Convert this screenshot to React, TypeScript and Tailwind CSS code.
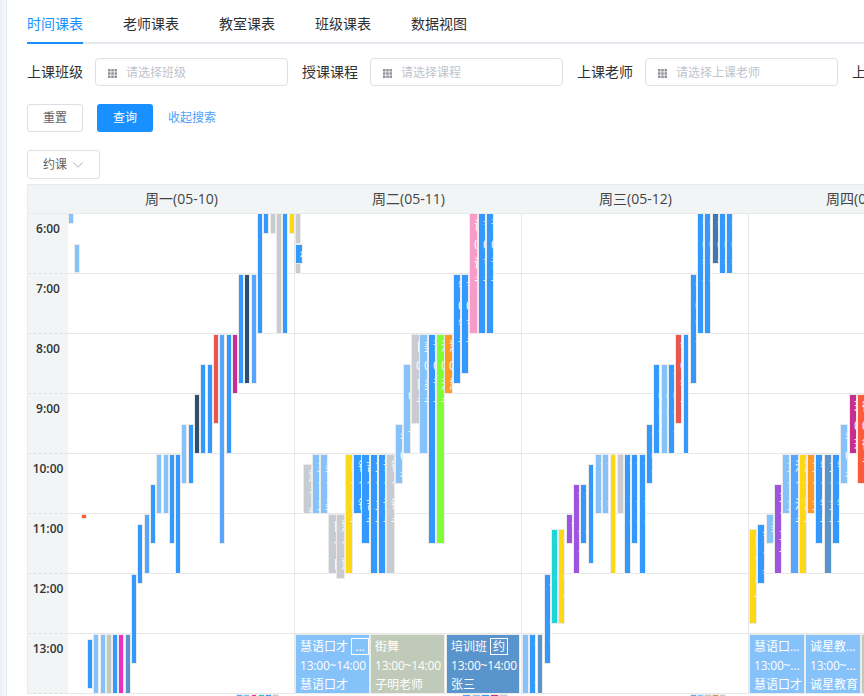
import { ChevronDown } from "lucide-react";

const blue = "#3399ff";
const sky = "#55a6ff";
const light = "#85c2fa";
const gray = "#c8ccd0";
const yellow = "#ffd814";
const navy = "#2f4f6f";
const steel = "#5a94cc";
const sage = "#bfcab8";
const red = "#e85650";
const berry = "#c82e8e";
const orange = "#ff9922";
const purple = "#9c55dc";

// x1, x2, y1, y2 in page pixels, colour, course
type Bar = [number, number, number, number, string, string?];

const bars: Bar[] = [
  [69, 73, 214, 223, light],
  [75, 79, 245, 272, light],
  [82, 86, 515, 518, "#ff5a2a"],
  [88, 92, 640, 688, blue],
  [94, 98, 635, 693, light],
  [101, 105, 635, 693, light],
  [107, 111, 635, 693, sage],
  [113, 117, 635, 693, blue],
  [119, 123, 635, 693, "#f02bc8"],
  [126, 130, 635, 693, steel],
  [132, 136, 575, 663, blue],
  [138, 142, 525, 583, blue],
  [145, 149, 515, 573, sky],
  [151, 155, 485, 543, blue],
  [157, 161, 455, 513, light],
  [164, 168, 455, 513, light],
  [170, 174, 455, 543, blue],
  [176, 180, 455, 573, blue],
  [182, 186, 425, 483, light],
  [189, 193, 425, 483, blue],
  [195, 199, 395, 453, navy],
  [201, 205, 365, 453, blue],
  [208, 212, 365, 453, blue],
  [214, 218, 335, 423, red],
  [220, 224, 335, 543, sky],
  [227, 231, 335, 453, blue],
  [233, 237, 335, 393, berry],
  [239, 243, 275, 383, blue],
  [245, 249, 275, 383, navy],
  [252, 256, 275, 383, sky],
  [258, 262, 214, 333, blue],
  [264, 268, 214, 233, blue],
  [271, 275, 214, 233, gray],
  [277, 281, 214, 333, gray],
  [283, 287, 214, 333, blue],
  [290, 294, 214, 233, yellow],
  [237, 242, 695, 720, sky],
  [244, 249, 695, 720, light],
  [252, 256, 695, 720, "#f02b98"],
  [259, 264, 695, 720, "#1ec8c8"],
  [266, 271, 695, 720, blue],
  [273, 278, 695, 720, gray],

  [296, 300, 214, 243, gray],
  [296, 302, 245, 263, blue, "街舞"],
  [296, 300, 264, 273, gray],
  [304, 311, 465, 513, gray, "慧语口才"],
  [313, 319, 455, 513, light, "主持"],
  [321, 327, 455, 513, light, "美术"],
  [329, 336, 515, 573, gray, "日语"],
  [337, 344, 515, 578, gray, "慧语口才"],
  [346, 352, 455, 573, yellow, "日语"],
  [354, 361, 455, 513, blue, "钢琴"],
  [362, 369, 455, 543, blue, "吉他"],
  [371, 377, 455, 573, blue, "主持"],
  [379, 385, 455, 573, blue, "诚星教育"],
  [387, 394, 455, 573, gray, "钢琴"],
  [396, 402, 425, 483, light, "老师"],
  [404, 410, 365, 453, light, "日语"],
  [412, 419, 335, 423, gray, "日语"],
  [420, 427, 335, 453, light, "美术"],
  [429, 435, 335, 543, blue, "诚星教育"],
  [437, 444, 335, 543, "#80ff33", "添加"],
  [445, 452, 335, 393, orange, "慧语口才"],
  [454, 460, 275, 383, blue, "钢琴"],
  [462, 468, 275, 373, blue, "吉他"],
  [470, 477, 214, 333, "#f59cc9", "诚星教育"],
  [479, 485, 214, 333, blue, "吉他"],
  [487, 493, 214, 333, blue, "诚星教育"],
  [463, 470, 695, 720, sky],
  [473, 480, 695, 720, light],
  [482, 489, 695, 720, blue],
  [491, 498, 695, 720, berry],
  [500, 507, 695, 720, gray],

  [523, 528, 635, 693, light, "慧语口才"],
  [530, 535, 635, 693, blue, "诚星教育"],
  [538, 542, 635, 693, steel],
  [545, 550, 575, 663, blue, "诚星教育"],
  [552, 557, 530, 623, "#1ed6d6", "钢琴"],
  [559, 564, 530, 623, yellow, "钢琴"],
  [567, 572, 515, 543, purple, "钢琴"],
  [574, 579, 485, 573, purple, "钢琴"],
  [581, 586, 485, 543, blue, "钢琴"],
  [589, 593, 465, 563, blue],
  [596, 601, 455, 513, light, "钢琴"],
  [603, 608, 455, 513, light, "钢琴"],
  [611, 615, 455, 573, yellow],
  [618, 623, 455, 513, gray, "钢琴"],
  [625, 630, 455, 573, blue, "钢琴"],
  [632, 637, 455, 543, blue, "钢琴"],
  [640, 645, 455, 573, blue, "钢琴"],
  [647, 652, 425, 483, blue, "钢琴"],
  [654, 659, 365, 453, blue, "钢琴"],
  [662, 667, 365, 453, light, "钢琴"],
  [669, 674, 365, 453, blue, "钢琴"],
  [676, 681, 335, 423, red, "钢琴"],
  [684, 688, 335, 453, blue],
  [691, 696, 275, 383, blue, "钢琴"],
  [698, 703, 214, 333, blue, "钢琴"],
  [705, 710, 214, 333, blue, "钢琴"],
  [713, 718, 214, 263, "#4178b0", "钢琴"],
  [720, 725, 214, 273, blue, "钢琴"],
  [727, 732, 214, 273, blue, "钢琴"],
  [691, 696, 695, 720, sky],
  [698, 703, 695, 720, light],
  [705, 711, 695, 720, sage],
  [713, 718, 695, 720, "#e88a2a"],
  [720, 725, 695, 720, gray],

  [750, 756, 530, 623, yellow, "日语"],
  [758, 764, 525, 583, blue, "吉他"],
  [767, 773, 515, 543, light, "美术"],
  [775, 781, 485, 573, purple, "主持"],
  [783, 789, 455, 513, light, "主持"],
  [791, 798, 455, 573, sky, "添加"],
  [800, 806, 455, 573, yellow, "慧语口才"],
  [808, 814, 455, 513, orange, "主持"],
  [816, 822, 455, 543, blue, "钢琴"],
  [825, 831, 455, 573, steel, "主持"],
  [833, 839, 455, 543, blue, "钢琴"],
  [841, 847, 425, 483, light, "老师"],
  [850, 856, 395, 453, berry, "珠心算"],
  [858, 864, 395, 483, "#ff5a3a", "街舞"],
];

const hours = ["6:00", "7:00", "8:00", "9:00", "10:00", "11:00", "12:00", "13:00"];
const days = ["周一(05-10)", "周二(05-11)", "周三(05-12)", "周四(05-13)"];
const tabs = ["时间课表", "老师课表", "教室课表", "班级课表", "数据视图"];
const filters = [
  ["上课班级", "请选择班级"],
  ["授课课程", "请选择课程"],
  ["上课老师", "请选择上课老师"],
  ["上课时间", "请选择上课时间"],
];

const grid_top = 214;

function GridIcon() {
  return (
    <svg width="9" height="9" viewBox="0 0 9 9" className="shrink-0" fill="#909399">
      <rect x="0" y="0" width="2.5" height="2.5" />
      <rect x="3.25" y="0" width="2.5" height="2.5" />
      <rect x="6.5" y="0" width="2.5" height="2.5" />
      <rect x="0" y="3.25" width="2.5" height="2.5" />
      <rect x="3.25" y="3.25" width="2.5" height="2.5" />
      <rect x="6.5" y="3.25" width="2.5" height="2.5" />
      <rect x="0" y="6.5" width="2.5" height="2.5" />
      <rect x="3.25" y="6.5" width="2.5" height="2.5" />
      <rect x="6.5" y="6.5" width="2.5" height="2.5" />
    </svg>
  );
}

function startTime(y: number) {
  const mins = y - grid_top + 360;
  const h = String(Math.floor(mins / 60)).padStart(2, "0");
  const m = String(Math.floor((mins % 60) / 5) * 5).padStart(2, "0");
  return `${h}:${m}`;
}

function BarItem({ bar }: { bar: Bar }) {
  const [x1, x2, y1, y2, color, course] = bar;
  return (
    <div
      className="absolute box-content overflow-hidden border border-[#ebebeb] pt-[2px] pl-1 text-xs leading-[19px] whitespace-nowrap text-white"
      style={{
        left: x1 - 1 - 68,
        top: y1 - grid_top - 1,
        width: x2 - x1 - 4,
        height: y2 - y1 - 2,
        backgroundColor: color,
      }}
    >
      {course && (
        <>
          <div>{course}</div>
          <div>{startTime(y1)}</div>
          <div>{course}</div>
          <div>专业</div>
        </>
      )}
    </div>
  );
}

function Card({
  x,
  w,
  color,
  title,
  badge,
  name,
}: {
  x: number;
  w: number;
  color: string;
  title: string;
  badge?: string;
  name: string;
}) {
  return (
    <div
      className="absolute top-[420px] box-content h-[56px] overflow-hidden border border-[#ebebeb] pt-[2px] pl-1 text-xs leading-[19px] whitespace-nowrap text-white"
      style={{ left: x - 1 - 68, width: w - 4, backgroundColor: color }}
    >
      <div className="flex items-center gap-[3px] truncate">
        <span className={badge ? "" : "max-w-[48px] truncate"}>{title}</span>
        {badge && (
          <span className="flex h-[17px] w-[18px] shrink-0 items-center justify-center border border-white leading-none">
            {badge}
          </span>
        )}
      </div>
      <div className="truncate tracking-[-0.2px]">13:00~14:00</div>
      <div className="truncate">{name}</div>
    </div>
  );
}

export default function App() {
  return (
    <div
      className="relative h-[696px] w-[864px] overflow-hidden bg-white pl-[27px] text-[#303133]"
      style={{ fontFamily: '"Open Sans", "Noto Sans CJK SC", sans-serif' }}
    >
      <div className="absolute inset-y-0 left-0 w-[7px] border-r border-[#e6eaf0] bg-gradient-to-r from-[#eaeef4] to-[#f8f9fb]" />

      <div className="flex h-[44px] w-[837px] gap-10 border-b-2 border-[#e4e7ed] text-sm">
        {tabs.map((t, i) => (
          <div
            key={t}
            className={
              i === 0
                ? "-mb-[2px] h-[44px] border-b-2 border-[#1890ff] pt-[14px] leading-5 text-[#1890ff]"
                : "pt-[14px] leading-5"
            }
          >
            {t}
          </div>
        ))}
      </div>

      <div className="mt-[14px] flex h-[28px] w-[900px] items-center gap-[14px]">
        {filters.map(([label, holder]) => (
          <div key={label} className="flex shrink-0 items-center gap-3">
            <span className="text-sm whitespace-nowrap">{label}</span>
            <div className="flex h-[28px] w-[193px] items-center gap-[9px] rounded border border-[#dcdfe6] pt-[2px] pl-[12px] text-xs text-[#c0c4cc]">
              <GridIcon />
              {holder}
            </div>
          </div>
        ))}
      </div>

      <div className="mt-[18px] flex h-[28px] items-center text-xs">
        <button className="h-[28px] w-[56px] rounded-[3px] border border-[#dcdfe6] text-[#606266]">
          重置
        </button>
        <button className="ml-[14px] h-[28px] w-[56px] rounded-[3px] bg-[#1890ff] text-white">
          查询
        </button>
        <span className="ml-[15px] text-[#4f9ef8]">收起搜索</span>
      </div>

      <button className="mt-[18px] flex h-[29px] w-[73px] items-center gap-[2px] rounded-[3px] border border-[#dcdfe6] pl-[15px] text-xs text-[#606266]">
        约课
        <ChevronDown size={18} strokeWidth={1} className="text-[#909399]" />
      </button>

      <div className="mt-[5px] w-[837px]">
        <div className="flex h-[30px] border-y border-[#e8ebeb] bg-[#f2f5f5] text-sm text-[#444]">
          <div className="w-[41px] shrink-0 border-l border-[#e8ebeb]" />
          {days.map((d) => (
            <div key={d} className="w-[227px] shrink-0 whitespace-nowrap pt-[4px] pl-[77px] leading-[19px]">
              {d}
            </div>
          ))}
        </div>
        <div className="relative flex">
          <div className="w-[41px] shrink-0 border-l border-[#e8ebeb] bg-[#f2f5f5]">
            {hours.map((h) => (
              <div
                key={h}
                className="h-[60px] border-b border-dashed border-[#dde1e1] pt-[5px] text-center text-xs leading-5 font-semibold text-[#333]"
              >
                {h}
              </div>
            ))}
          </div>
          <div className="relative h-[480px] flex-1">
            <div className="flex">
              {days.map((d) => (
                <div key={d} className="h-[480px] w-[227px] shrink-0 border-r border-[#e8e8e8]" />
              ))}
            </div>
            <div className="absolute inset-0">
              {hours.map((h) => (
                <div key={h} className="h-[60px] border-b border-[#e8e8e8]" />
              ))}
            </div>
            {bars.map((b, i) => (
              <BarItem key={i} bar={b} />
            ))}
            <Card x={296} w={73} color={light} title="慧语口才" badge="..." name="慧语口才" />
            <Card x={371} w={73} color={sage} title="街舞" name="子明老师" />
            <Card x={447} w={72} color={steel} title="培训班" badge="约" name="张三" />
            <Card x={750} w={54} color={light} title="慧语口才教育" name="慧语口才" />
            <Card x={806} w={54} color={light} title="诚星教育中心" name="诚星教育" />
            <Card x={862} w={40} color={sage} title="街舞" name="子明老师" />
          </div>
        </div>
      </div>
    </div>
  );
}
